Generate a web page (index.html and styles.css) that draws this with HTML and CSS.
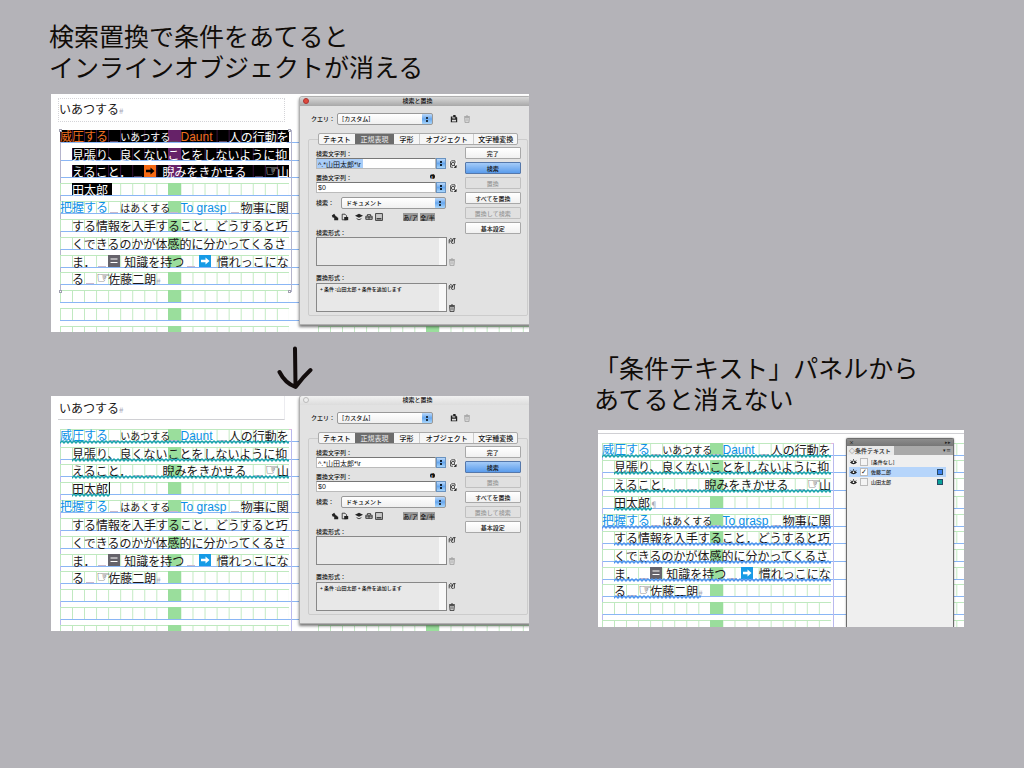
FILE: index.html
```html
<!DOCTYPE html>
<html lang="ja">
<head>
<meta charset="utf-8">
<title>検索置換と条件テキスト</title>
<link rel="stylesheet" href="styles.css">
</head>
<body>
<svg class="sprite" aria-hidden="true">
  <symbol id="i-arrow" viewBox="0 0 12 12"><path d="M2 4.8h4.500V2.500L10.500 6 6.500 9.500V7.200H2z"/></symbol>
  <symbol id="i-equal" viewBox="0 0 12 12"><path d="M2.500 4h7M2.500 7.500h7" stroke="currentColor" stroke-width="1.200"/></symbol>
  <symbol id="i-save" viewBox="0 0 10 10"><path d="M1 2h6.500L9 3.500V9H1z"/><path d="M3 2h3.500v2.500H3zM2.500 6h5v2h-5z" fill="#ddd"/><path d="M4 0h3v3H4z"/></symbol>
  <symbol id="i-trash" viewBox="0 0 10 10"><path d="M2 3h6l-.6 6.500H2.600zM1.500 2h7M4 1h2" fill="none" stroke="currentColor"/><path d="M4 4v4M6 4v4" stroke="currentColor" stroke-width=".7"/></symbol>
  <symbol id="i-find" viewBox="0 0 10 10"><path d="M2 2l1.500-1h4v3M2 2v7h3" fill="none" stroke="currentColor"/><circle cx="5" cy="5" r="2" fill="none" stroke="currentColor"/><path d="M6.500 6.500l2 2M9 9.500H6.500L9 7z" stroke="currentColor"/></symbol>
  <symbol id="i-style" viewBox="0 0 10 10"><path d="M1.500 8V3.500Q3.500 0 5.500 3.500V5H2M4 8l2.500-6M6.500 2h3M8 2v6M5 8h2" fill="none" stroke="currentColor"/></symbol>
  <symbol id="i-lock" viewBox="0 0 10 10"><path d="M1 3l3-2 2 3 2 1v4H4V6L2 5.500zM4 6h5v3H4z"/></symbol>
  <symbol id="i-pagelock" viewBox="0 0 10 10"><path d="M1.500 8.500v-7h3.500l2 2V8.500z" fill="none" stroke="currentColor"/><path d="M4 5h5v4H4z"/></symbol>
  <symbol id="i-layer" viewBox="0 0 10 10"><path d="M0 3.500L5 1l5 2.500L5 6z"/><path d="M2 7l3 1.500L8 7" fill="none" stroke="currentColor"/></symbol>
  <symbol id="i-master" viewBox="0 0 10 10"><path d="M1 4h8v4H1zM3 4V2h4v2M5 4v4M1 6h8" fill="none" stroke="currentColor"/></symbol>
  <symbol id="i-note" viewBox="0 0 10 10"><path d="M.7.7h8.600v8.600H.7z" fill="#c8c8c8" stroke="currentColor"/><path d="M2 6.500h6v1.500H2z"/></symbol>
  <symbol id="i-eye" viewBox="0 0 10 10"><path d="M0 5Q5-1 10 5 5 10 0 5z"/><circle cx="5" cy="4.500" r="1.200" fill="#fff"/><path d="M1 2l1 1M5 0v2M9 2L8 3" stroke="currentColor"/></symbol>
</svg>
<main class="slide">
  <section class="column">
    <h1 class="heading">検索置換で条件をあてると<br>インラインオブジェクトが消える</h1>

    <div class="page">
      <div class="page-head page-head--boxed">いあつする<i class="mark">#</i></div>
      <div class="spread spread--framed">
        <div class="row"><p class="cells sel"><span class="c1 term">威圧する</span><i class="c5 sp"></i><span class="c6 yomi">いあつする</span><i class="c10 sp"></i><span class="c11 term">Daunt</span><i class="c14 sp"></i><span class="c15">人の行動を</span></p><p class="cells next"></p></div>
        <div class="row"><p class="cells sel sel--indent"><span class="c2">見張り、良くないことをしないように抑</span></p><p class="cells next"></p></div>
        <div class="row"><p class="cells sel sel--indent"><span class="c2">えること．</span><i class="c7 sp"></i><span class="c8 chip chip--orange"><svg><use href="#i-arrow"/></svg></span><span class="c9 gothic half">睨みをきかせる</span><i class="c17 sp"></i><span class="c18 hand">☞</span><span class="c19">山</span></p><p class="cells next"></p></div>
        <div class="row"><p class="cells"><span class="c2 sel-text">田太郎</span></p><p class="cells next"></p></div>
        <div class="row"><p class="cells"><span class="c1 term">把握する</span><i class="c5 sp"></i><span class="c6 yomi">はあくする</span><i class="c10 sp"></i><span class="c11 term">To grasp</span><i class="c15 sp"></i><span class="c16">物事に関</span></p><p class="cells next"></p></div>
        <div class="row"><p class="cells"><span class="c2">する情報を入手すること．どうすると巧</span></p><p class="cells next"></p></div>
        <div class="row"><p class="cells"><span class="c2">くできるのかが体感的に分かってくるさ</span></p><p class="cells next"></p></div>
        <div class="row"><p class="cells"><span class="c2">ま．</span><i class="c4 sp"></i><span class="c5 chip chip--gray"><svg><use href="#i-equal"/></svg></span><span class="c6 gothic third">知識を持つ</span><i class="c11 sp half"></i><span class="c12 half"><span class="chip chip--blue"><svg><use href="#i-arrow"/></svg></span></span><span class="c14 gothic">慣れっこにな</span></p><p class="cells next"></p></div>
        <div class="row"><p class="cells"><span class="c2">る</span><i class="c3 sp"></i><span class="c4 hand">☞</span><span class="c5 gothic">佐藤二朗<i class="mark">#</i></span></p><p class="cells next"></p></div>
        <div class="row"><p class="cells"></p><p class="cells next"></p></div>
        <div class="row"><p class="cells"></p><p class="cells next"></p></div>
        <div class="row row--cut"><p class="cells"></p><p class="cells next"></p></div>
        <i class="handle handle--tl"></i><i class="handle handle--tr"></i><i class="handle handle--bl"></i><i class="handle handle--br"></i>
      </div>
      <form class="dialog" onsubmit="return false">
        <header class="dialog-title"><i class="close close--red"></i>検索と置換</header>
        <div class="query">
          <label for="q1">クエリ：</label>
          <select id="q1" class="pop"><option>[カスタム]</option></select>
          <svg class="ico"><use href="#i-save"/></svg><svg class="ico dim"><use href="#i-trash"/></svg>
        </div>
        <div class="tabs"><button type="button">テキスト</button><button type="button" class="on">正規表現</button><button type="button">字形</button><button type="button">オブジェクト</button><button type="button">文字種変換</button></div>
        <div class="panel-body">
          <div class="fields">
            <label for="f1">検索文字列：</label>
            <div class="combo"><input id="f1" class="picked" value="^.*山田太郎*\r"><button type="button" class="step" aria-label="検索履歴"></button><svg class="ico boxed"><use href="#i-find"/></svg></div>
            <div class="label-row"><label for="r1">置換文字列：</label><i class="info">i</i></div>
            <div class="combo"><input id="r1" value="$0"><button type="button" class="step" aria-label="置換履歴"></button><svg class="ico boxed"><use href="#i-find"/></svg></div>
            <div class="scope"><label for="s1">検索：</label><select id="s1" class="pop"><option>ドキュメント</option></select></div>
            <div class="options"><svg class="ico"><use href="#i-lock"/></svg><svg class="ico"><use href="#i-pagelock"/></svg><svg class="ico gap"><use href="#i-layer"/></svg><svg class="ico"><use href="#i-master"/></svg><svg class="ico"><use href="#i-note"/></svg><button type="button" class="kana gap2">あ/ア</button><button type="button" class="kana">全/半</button></div>
            <label for="ff1">検索形式：</label>
            <div class="format"><textarea id="ff1"></textarea><div class="side"><svg class="ico"><use href="#i-style"/></svg><svg class="ico dim"><use href="#i-trash"/></svg></div></div>
            <label for="rf1" class="second">置換形式：</label>
            <div class="format"><textarea id="rf1">+ 条件 :山田太郎 + 条件を追加します</textarea><div class="side"><svg class="ico"><use href="#i-style"/></svg><svg class="ico"><use href="#i-trash"/></svg></div></div>
          </div>
          <div class="actions"><button type="button">完了</button><button type="button" class="primary">検索</button><button type="button" disabled>置換</button><button type="button">すべてを置換</button><button type="button" disabled>置換して検索</button><button type="button">基本設定</button></div>
        </div>
      </form>
    </div>

    <svg class="down" viewBox="0 0 36 44" aria-label="下向き矢印"><path d="M18 2.500L18.500 40M2.500 26Q8 37 18.500 41Q26 31 33.500 24" fill="none" stroke="#120c0c" stroke-width="4" stroke-linecap="round" stroke-linejoin="round"/></svg>

    <div class="page">
      <div class="page-head page-head--second">いあつする<i class="mark">#</i></div>
      <div class="spread">
        <div class="row"><p class="cells wave"><span class="c1 term">威圧する</span><i class="c5 sp"></i><span class="c6 yomi">いあつする</span><i class="c10 sp"></i><span class="c11 term">Daunt</span><i class="c14 sp"></i><span class="c15">人の行動を</span></p><p class="cells next"></p></div>
        <div class="row"><p class="cells wave wave--indent"><span class="c2">見張り、良くないことをしないように抑</span></p><p class="cells next"></p></div>
        <div class="row"><p class="cells wave wave--indent"><span class="c2">えること．</span><i class="c7 sp"></i><i class="c8 sp"></i><span class="c9 gothic half">睨みをきかせる</span><i class="c17 sp"></i><span class="c18 hand">☞</span><span class="c19">山</span></p><p class="cells next"></p></div>
        <div class="row"><p class="cells wave wave--short"><span class="c2 gothic caret">田太郎</span></p><p class="cells next"></p></div>
        <div class="row"><p class="cells"><span class="c1 term">把握する</span><i class="c5 sp"></i><span class="c6 yomi">はあくする</span><i class="c10 sp"></i><span class="c11 term">To grasp</span><i class="c15 sp"></i><span class="c16">物事に関</span></p><p class="cells next"></p></div>
        <div class="row"><p class="cells"><span class="c2">する情報を入手すること．どうすると巧</span></p><p class="cells next"></p></div>
        <div class="row"><p class="cells"><span class="c2">くできるのかが体感的に分かってくるさ</span></p><p class="cells next"></p></div>
        <div class="row"><p class="cells"><span class="c2">ま．</span><i class="c4 sp"></i><span class="c5 chip chip--gray"><svg><use href="#i-equal"/></svg></span><span class="c6 gothic third">知識を持つ</span><i class="c11 sp half"></i><span class="c12 half"><span class="chip chip--blue"><svg><use href="#i-arrow"/></svg></span></span><span class="c14 gothic">慣れっこにな</span></p><p class="cells next"></p></div>
        <div class="row"><p class="cells"><span class="c2">る</span><i class="c3 sp"></i><span class="c4 hand">☞</span><span class="c5 gothic">佐藤二朗<i class="mark">#</i></span></p><p class="cells next"></p></div>
        <div class="row"><p class="cells"></p><p class="cells next"></p></div>
        <div class="row"><p class="cells"></p><p class="cells next"></p></div>
        <div class="row row--cut"><p class="cells"></p><p class="cells next"></p></div>
      </div>
      <form class="dialog dialog--idle" onsubmit="return false">
        <header class="dialog-title"><i class="close"></i>検索と置換</header>
        <div class="query">
          <label for="q2">クエリ：</label>
          <select id="q2" class="pop"><option>[カスタム]</option></select>
          <svg class="ico"><use href="#i-save"/></svg><svg class="ico dim"><use href="#i-trash"/></svg>
        </div>
        <div class="tabs"><button type="button">テキスト</button><button type="button" class="on">正規表現</button><button type="button">字形</button><button type="button">オブジェクト</button><button type="button">文字種変換</button></div>
        <div class="panel-body">
          <div class="fields">
            <label for="f2">検索文字列：</label>
            <div class="combo"><input id="f2" value="^.*山田太郎*\r"><button type="button" class="step" aria-label="検索履歴"></button><svg class="ico boxed"><use href="#i-find"/></svg></div>
            <div class="label-row"><label for="r2">置換文字列：</label><i class="info">i</i></div>
            <div class="combo"><input id="r2" value="$0"><button type="button" class="step" aria-label="置換履歴"></button><svg class="ico boxed"><use href="#i-find"/></svg></div>
            <div class="scope"><label for="s2">検索：</label><select id="s2" class="pop"><option>ドキュメント</option></select></div>
            <div class="options"><svg class="ico"><use href="#i-lock"/></svg><svg class="ico"><use href="#i-pagelock"/></svg><svg class="ico gap"><use href="#i-layer"/></svg><svg class="ico"><use href="#i-master"/></svg><svg class="ico"><use href="#i-note"/></svg><button type="button" class="kana gap2">あ/ア</button><button type="button" class="kana">全/半</button></div>
            <label for="ff2">検索形式：</label>
            <div class="format"><textarea id="ff2"></textarea><div class="side"><svg class="ico"><use href="#i-style"/></svg><svg class="ico dim"><use href="#i-trash"/></svg></div></div>
            <label for="rf2" class="second">置換形式：</label>
            <div class="format"><textarea id="rf2">+ 条件 :山田太郎 + 条件を追加します</textarea><div class="side"><svg class="ico"><use href="#i-style"/></svg><svg class="ico"><use href="#i-trash"/></svg></div></div>
          </div>
          <div class="actions"><button type="button">完了</button><button type="button" class="primary">検索</button><button type="button" disabled>置換</button><button type="button">すべてを置換</button><button type="button" disabled>置換して検索</button><button type="button">基本設定</button></div>
        </div>
      </form>
    </div>
  </section>

  <section class="column column--right">
    <h2 class="heading">「条件テキスト」パネルから<br>あてると消えない</h2>
    <div class="page">
      <div class="page-head page-head--strip"></div>
      <div class="spread spread--ten">
        <div class="row"><p class="cells wave"><span class="c1 term">威圧する</span><i class="c5 sp"></i><span class="c6 yomi">いあつする</span><i class="c10 sp"></i><span class="c11 term">Daunt</span><i class="c14 sp"></i><span class="c15">人の行動を</span></p><p class="cells next"></p></div>
        <div class="row"><p class="cells wave wave--indent"><span class="c2">見張り、良くないことをしないように抑</span></p><p class="cells next"></p></div>
        <div class="row"><p class="cells wave wave--indent"><span class="c2">えること．</span><i class="c7 sp"></i><i class="c8 sp"></i><span class="c9 gothic half">睨みをきかせる</span><i class="c17 sp"></i><span class="c18 hand">☞</span><span class="c19">山</span></p><p class="cells next"></p></div>
        <div class="row"><p class="cells wave wave--short"><span class="c2 gothic">田太郎<i class="mark">¶</i></span></p><p class="cells next"></p></div>
        <div class="row"><p class="cells wave wave--blue"><span class="c1 term">把握する</span><i class="c5 sp"></i><span class="c6 yomi">はあくする</span><i class="c10 sp"></i><span class="c11 term">To grasp</span><i class="c15 sp"></i><span class="c16">物事に関</span></p><p class="cells next"></p></div>
        <div class="row"><p class="cells wave wave--blue wave--indent"><span class="c2">する情報を入手すること．どうすると巧</span></p><p class="cells next"></p></div>
        <div class="row"><p class="cells wave wave--blue wave--indent"><span class="c2">くできるのかが体感的に分かってくるさ</span></p><p class="cells next"></p></div>
        <div class="row"><p class="cells wave wave--blue wave--indent"><span class="c2">ま．</span><i class="c4 sp"></i><span class="c5 chip chip--gray"><svg><use href="#i-equal"/></svg></span><span class="c6 gothic third">知識を持つ</span><i class="c11 sp half"></i><span class="c12 half"><span class="chip chip--blue"><svg><use href="#i-arrow"/></svg></span></span><span class="c14 gothic">慣れっこにな</span></p><p class="cells next"></p></div>
        <div class="row"><p class="cells wave wave--blue wave--mid"><span class="c2">る</span><i class="c3 sp"></i><span class="c4 hand">☞</span><span class="c5 gothic">佐藤二朗<i class="mark">#</i></span></p><p class="cells next"></p></div>
        <div class="row"><p class="cells"></p><p class="cells next"></p></div>
        <div class="row row--cut"><p class="cells"></p><p class="cells next"></p></div>
      </div>
      <aside class="cond">
        <div class="cond-bar"><span>×</span><span>▸▸</span></div>
        <div class="cond-tabs"><span class="cond-tab">◇条件テキスト</span><span class="cond-menu">▾≡</span></div>
        <ul class="cond-list">
          <li><svg class="ico"><use href="#i-eye"/></svg><input type="checkbox" id="k0"><label for="k0">[条件なし]</label></li>
          <li class="current"><svg class="ico"><use href="#i-eye"/></svg><input type="checkbox" id="k1" checked><label for="k1">佐藤二郎</label><i class="swatch swatch--blue"></i></li>
          <li><svg class="ico"><use href="#i-eye"/></svg><input type="checkbox" id="k2"><label for="k2">山田太郎</label><i class="swatch swatch--teal"></i></li>
        </ul>
      </aside>
    </div>
  </section>
</main>
</body>
</html>
```

FILE: styles.css
```css
* { box-sizing: border-box; }
body {
  margin: 0;
  min-height: 100vh;
  background: #b4b3b8;
  color: #1c1818;
  font-family: "Liberation Sans", "Noto Sans CJK JP", sans-serif;
}
p, ul, h1, h2 { margin: 0; padding: 0; }
i { font-style: normal; }
.sprite { position: absolute; width: 0; height: 0; }

.slide {
  display: grid;
  grid-template-columns: minmax(0, 478fr) minmax(0, 366fr);
  column-gap: 69px;
  padding: 20px 60px 40px 51px;
}
.column { display: flex; flex-direction: column; }
.column--right { padding-top: 332px; }
.heading {
  font: 400 25px/31px "Noto Sans CJK JP", sans-serif;
  color: #100c08;
  white-space: nowrap;
  margin-left: -2px;
  margin-bottom: 12px;
}
.column--right .heading { margin-left: -4px; margin-bottom: 16px; }
.down { width: 36px; height: 44px; margin: 14px 0 6px 226px; }

/* document page */
.page { position: relative; overflow: hidden; background: #fff; }
.page-head {
  height: 31px;
  padding: 0 8px;
  font: 400 12px/31px "Noto Sans CJK JP", sans-serif;
}
.page-head--boxed {
  height: 24px;
  line-height: 20px;
  margin: 4px 0 3px 7px;
  padding: 0;
  width: 227px;
  border: 1px dotted #d4d4d8;
}
.page-head--second {
  height: 24px;
  line-height: 24px;
  margin: 0 0 4px 7px;
  padding: 0 1px;
  width: 227px;
  border-right: 1px solid #ececf0;
  border-bottom: 1px solid #d0d0d4;
}
.page-head--strip { height: 4px; margin-bottom: 4px; border-bottom: 1px solid #d0d0d4; }
.mark { color: #a9a9b8; font-size: 8px; font-weight: 400; }

.spread {
  position: relative;
  display: grid;
  grid-template-rows: repeat(11, 1fr) 11px;
  height: 207px;
  margin-left: 9px;
}
.spread--ten { grid-template-rows: repeat(10, 1fr) 12px; height: 189px; margin-left: 4px; }
.spread::before {
  content: "";
  position: absolute;
  left: 0;
  top: 5px;
  bottom: 0;
  width: 230px;
  border: 1px solid #b9b9ee;
  border-top-color: #eab8dc;
  border-bottom: 0;
}
.spread--framed::before { bottom: 40px; border-color: #b4b4cc; }
.row {
  display: flex;
  align-items: flex-end;
  min-height: 0;
  border-bottom: 1px solid #8ab6f5;
}
.row--cut { align-items: flex-start; padding-top: 5px; border: 0; overflow: hidden; }
.cells {
  position: relative;
  flex: none;
  display: grid;
  grid-template-columns: repeat(19, minmax(0, 1fr));
  grid-template-rows: 12px;
  width: 229px;
  height: 12px;
  font: 400 12px/14px "Noto Sans CJK JP", sans-serif;
  white-space: nowrap;
  background:
    linear-gradient(#9ade9c, #9ade9c) 108px 0 / 13px 100% no-repeat,
    linear-gradient(#bfe9bf, #bfe9bf) 0 0 / 100% 1px no-repeat,
    linear-gradient(to right, #bfe9bf 1px, transparent 1px) 0 0 / calc(100% / 19) 100%;
}
.cells > * { grid-row: 1; }
.next { margin-left: 29px; }
.c1 { grid-column: 1; } .c2 { grid-column: 2; } .c3 { grid-column: 3; }
.c4 { grid-column: 4; } .c5 { grid-column: 5; } .c6 { grid-column: 6; }
.c7 { grid-column: 7; } .c8 { grid-column: 8; } .c9 { grid-column: 9; }
.c10 { grid-column: 10; } .c11 { grid-column: 11; } .c12 { grid-column: 12; }
.c14 { grid-column: 14; } .c15 { grid-column: 15; } .c16 { grid-column: 16; }
.c17 { grid-column: 17; } .c18 { grid-column: 18; } .c19 { grid-column: 19; }
.term { color: #0b90e6; font-family: "Liberation Sans", "Noto Sans CJK JP", sans-serif; }
.yomi { font-size: 10px; }
.half { padding-left: 6px; }
.third { padding-left: 4px; }
.hand { font-family: "DejaVu Sans", sans-serif; font-size: 16px; line-height: 12px; }
.sp { align-self: end; width: 8px; height: 3px; margin-left: 2px; border-bottom: 1px solid #c9b9cc; }
.sp.half { margin-left: 6px; padding: 0; }
.chip { display: block; width: 12px; height: 12px; color: #fff; }
.chip svg { display: block; width: 12px; height: 12px; fill: currentColor; }
.chip--gray { background: #66636b; }
.chip--blue { background: #179be6; }
.chip--orange { background: #f56a14; color: #000; }
.sel {
  color: #fff;
  background:
    linear-gradient(#662268, #662268) 108px 0 / 13px 100% no-repeat,
    linear-gradient(to right, #3c163e 1px, #000 1px) 0 0 / calc(100% / 19) 100%;
}
.sel--indent {
  background:
    linear-gradient(#fff, #fff) 1px 0 / 11px 100% no-repeat,
    linear-gradient(#b4b4cc, #b4b4cc) 0 0 / 1px 100% no-repeat,
    linear-gradient(#662268, #662268) 108px 0 / 13px 100% no-repeat,
    linear-gradient(to right, #3c163e 1px, #000 1px) 0 0 / calc(100% / 19) 100%;
}
.sel .term { color: #f07020; }
.sel .sp { border-color: #54405a; }
.sel-text { width: 40px; background: #000; color: #fff; }
.caret { width: 38px; border-right: 1px solid #222; }
.wave::after {
  content: "";
  position: absolute;
  z-index: 1;
  left: 0;
  right: 0;
  bottom: -3px;
  height: 4px;
  background: url("data:image/svg+xml,%3Csvg xmlns='http://www.w3.org/2000/svg' width='4' height='4' viewBox='0 0 4 4'%3E%3Cpath d='M-1 4L2 1L5 4' fill='none' stroke='%2318a5a8' stroke-width='1.4'/%3E%3C/svg%3E") 0 0 / 4px 4px repeat-x;
}
.wave--blue::after {
  background-image: url("data:image/svg+xml,%3Csvg xmlns='http://www.w3.org/2000/svg' width='4' height='4' viewBox='0 0 4 4'%3E%3Cpath d='M-1 4L2 1L5 4' fill='none' stroke='%234c94ee' stroke-width='1.4'/%3E%3C/svg%3E");
}
.wave--indent::after { left: 12px; }
.wave--short::after { left: 12px; right: 179px; }
.wave--mid::after { left: 12px; right: 130px; }
.handle { position: absolute; width: 3px; height: 3px; border: 1px solid #a0a0b0; background: #fff; }
.handle--tl { left: -1px; top: 4px; }
.handle--tr { left: 228px; top: 4px; }
.handle--bl { left: -1px; bottom: 39px; }
.handle--br { left: 228px; bottom: 39px; }

/* find and replace dialog */
.dialog {
  position: absolute;
  left: 248px;
  top: 2px;
  width: 232px;
  padding-bottom: 8px;
  background: #e2e2e2;
  border: 1px solid #b0b0b0;
  border-radius: 3px 3px 0 0;
  box-shadow: 0 2px 3px #0008;
  color: #111;
  font: 500 6px/8px "Noto Sans CJK JP", sans-serif;
}
.dialog--idle { top: -1px; }
.dialog button, .dialog input, .dialog select, .dialog textarea {
  font: inherit;
  color: inherit;
  margin: 0;
  padding: 0;
  border: 0;
  border-radius: 0;
  outline: 0;
  appearance: none;
}
.dialog-title {
  position: relative;
  height: 9px;
  line-height: 8px;
  padding-left: 5px;
  text-align: center;
  border-radius: 3px 3px 0 0;
  background: linear-gradient(#d8d8d8, #a8a8a8);
}
.dialog--idle .dialog-title { background: linear-gradient(#f2f2f2, #dcdcdc); }
.close { position: absolute; left: 3px; top: 1px; width: 6px; height: 6px; border: 1px solid #bbb; border-radius: 50%; background: #eee; }
.close--red { border-color: #a33; background: #e04a3c; }
.ico { flex: none; width: 8px; height: 8px; color: #222; fill: currentColor; }
.dim { color: #999; }
.query { display: flex; align-items: center; margin: 7px 0 0 11px; height: 12px; }
.query label { width: 26px; }
.query .pop { width: 96px; margin-right: 17px; }
.query .ico + .ico { margin-left: 5px; }
.dialog .pop {
  height: 12px;
  padding-left: 4px;
  border: 1px solid #999;
  border-radius: 2px;
  background:
    linear-gradient(#234, #234) right 4px top 3px / 2px 2px no-repeat,
    linear-gradient(#234, #234) right 4px top 6px / 2px 2px no-repeat,
    linear-gradient(#bcd9fa, #67a7ee 50%, #a9d6fb) right / 10px 100% no-repeat,
    linear-gradient(#fff, #f0f0f0);
}
.tabs { position: relative; z-index: 1; display: flex; margin: 8px 0 0 18px; height: 12px; width: 200px; border: 1px solid #aaa; border-radius: 2px; background: #f6f6f6; }
.dialog .tabs button { flex: 36 1 0; font-size: 7px; line-height: 9px; background: none; white-space: nowrap; }
.dialog .tabs button:nth-child(2) { flex-grow: 40; }
.dialog .tabs button:nth-child(3) { flex-grow: 25; }
.dialog .tabs button:nth-child(4) { flex-grow: 54; border-left: 1px solid #ccc; border-right: 1px solid #ccc; }
.dialog .tabs button:nth-child(5) { flex-grow: 43; }
.dialog .tabs .on { background: #6c6c6c; color: #ddd; }
.panel-body {
  display: flex;
  margin: -6px 2px 0 8px;
  padding: 7px 6px 3px 7px;
  border: 1px solid #ccc;
  border-radius: 2px;
}
.fields { width: 150px; display: flex; flex-direction: column; }
.fields > label { height: 9px; line-height: 9px; margin-top: 2px; }
.combo { display: flex; align-items: center; height: 11px; }
.dialog .combo input { width: 120px; height: 11px; background: #fff; border: 1px solid #bbb; border-top-color: #777; padding-left: 1px; font: 400 7px/9px "Liberation Sans", "Noto Sans CJK JP", sans-serif; }
.dialog .combo .picked { background: linear-gradient(#a9cdf8, #a9cdf8) 0 0 / 46px 100% no-repeat, #fff; }
.dialog .step {
  width: 10px;
  height: 11px;
  border: 1px solid #6a93c0;
  background:
    linear-gradient(#123, #123) 3px 2px / 2px 2px no-repeat,
    linear-gradient(#123, #123) 3px 5px / 2px 2px no-repeat,
    linear-gradient(#bcd9fa, #67a7ee 50%, #a9d6fb);
}
.boxed { margin-left: 3px; background: #f2f2f2; }
.label-row { display: flex; justify-content: space-between; align-items: center; height: 9px; margin-top: 4px; padding-right: 30px; line-height: 9px; }
.info { width: 5px; height: 5px; border-radius: 50%; background: #111; color: #fff; font-size: 5px; line-height: 5px; text-align: center; margin-bottom: 2px; }
.scope { display: flex; align-items: center; margin-top: 4px; }
.scope label { width: 25px; }
.scope .pop { width: 105px; }
.options { display: flex; align-items: center; margin: 3px 0 4px 15px; gap: 2px; height: 10px; }
.options .gap { margin-left: 4px; }
.dialog .kana { width: 15px; height: 8px; line-height: 7px; background: #999; white-space: nowrap; }
.dialog .gap2 { margin-left: 18px; }
.format { display: flex; }
.dialog textarea { width: 131px; height: 29px; resize: none; overflow: hidden; padding: 1px 3px; border: 1px solid #888; background: linear-gradient(to right, #e8e8e8 122px, #f8f8f8 122px); font-size: 5px; line-height: 7px; }
.side { display: flex; flex-direction: column; justify-content: space-between; margin-left: 1px; }
.fields > .second { margin-top: 7px; height: 10px; }
.actions { display: flex; flex-direction: column; gap: 3px; width: 57px; }
.dialog .actions button { height: 12px; line-height: 9px; border: 1px solid #a8a8a8; border-radius: 1px; background: linear-gradient(#fff, #f0f0f0); }
.dialog .actions .primary { background: linear-gradient(#a4cbf8, #5a9cec); border-color: #5578ab; }
.dialog .actions button:disabled { color: #999; background: #e0e0e0; border-color: #c0c0c0; }

/* conditional text panel */
.cond {
  position: absolute;
  left: 248px;
  top: 8px;
  bottom: 0;
  width: 108px;
  border: 1px solid #6e6e6e;
  border-bottom: 0;
  border-radius: 2px 2px 0 0;
  background: #efefef;
  box-shadow: 0 0 2px #0006;
  color: #222;
  font: 500 5px/8px "Noto Sans CJK JP", sans-serif;
}
.cond-bar { display: flex; justify-content: space-between; height: 7px; line-height: 6px; padding: 0 2px; background: linear-gradient(#8c8c8c, #777); }
.cond-tabs { display: flex; justify-content: space-between; height: 9px; background: #a9a9a9; }
.cond-tab { padding: 0 3px 0 2px; background: #e9e9e9; font-size: 6px; line-height: 9px; white-space: nowrap; }
.cond-menu { padding-right: 2px; }
.cond-list { list-style: none; margin: 2px 7px 0 2px; }
.cond-list li { display: flex; align-items: center; height: 10px; }
.cond-list .current { background: #b6d5fb; }
.cond-list .ico { margin-left: 1px; width: 7px; height: 7px; }
.cond-list input { appearance: none; width: 8px; height: 8px; margin: 0 3px; border: 1px solid #bbb; background: #f4f4f4; }
.cond-list input:checked { background: #fff; }
.cond-list input:checked::after { content: "✓"; display: block; color: #222; font: bold 7px/6px "DejaVu Sans", sans-serif; }
.swatch { width: 6px; height: 6px; margin-left: auto; margin-right: 3px; border: 1px solid #2a4a66; }
.swatch--blue { background: #3b82f0; }
.swatch--teal { background: #0aa29a; }
```
